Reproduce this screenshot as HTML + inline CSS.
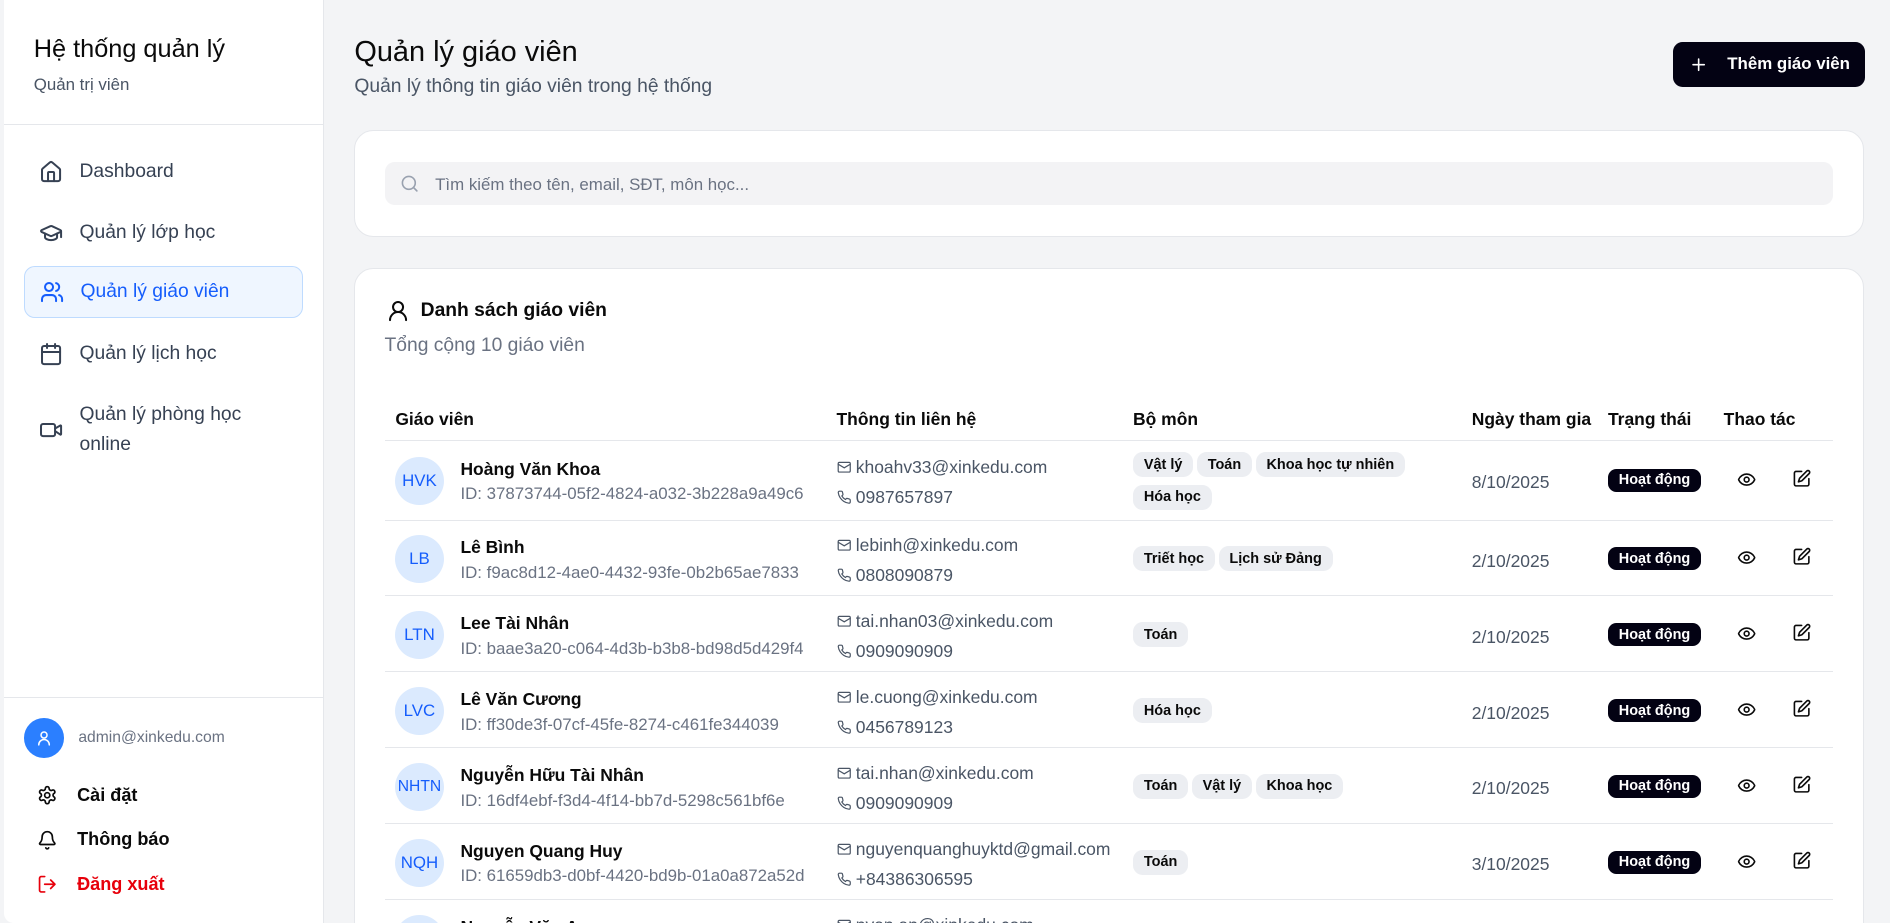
<!DOCTYPE html>
<html><head><meta charset="utf-8"><style>
html,body{margin:0;padding:0;width:1890px;height:923px;overflow:hidden}
#w{zoom:1.20536;width:1568px;height:766px;position:relative;background:#f3f4f6;font-family:"Liberation Sans",sans-serif;color:#0a0a0a;overflow:hidden}
.a{position:absolute}
svg{fill:none;stroke:currentColor;stroke-width:2;stroke-linecap:round;stroke-linejoin:round}
#sb{left:3px;top:0;width:265px;height:766px;background:#fff;border-right:1px solid #e5e7eb;border-radius:0 0 0 8px}
.nav{position:absolute;left:17px;width:232px;height:42px;display:flex;align-items:center;font-size:16px;color:#364153}
.nav svg{width:20px;height:20px;margin:0 14px 0 12px;flex:none}
.ft{position:absolute;left:28px;font-size:15px;font-weight:bold;display:flex;align-items:center}
.ft svg{width:17px;height:17px;margin-right:16px}
.card{background:#fff;border:1px solid #e5e7eb;border-radius:16px}
.th{position:absolute;top:339px;font-size:14.5px;font-weight:bold}
.row{position:absolute;left:319px;width:1202px;border-top:1px solid #e5e7eb}
.av{position:absolute;left:9px;width:40px;height:40px;border-radius:50%;background:#dbeafe;color:#155dfc;font-size:14px;display:flex;align-items:center;justify-content:center}
.nm{position:absolute;left:63px;font-size:14.5px;font-weight:bold}
.id{position:absolute;left:63px;font-size:14px;color:#6a7282}
.ct{position:absolute;left:375px;font-size:14.5px;color:#4a5565;display:flex;align-items:center}
.ct svg{width:12px;height:12px;margin-right:4px;stroke-width:2}
.tg{position:absolute;left:621px;width:240px;font-size:12px;font-weight:bold}
.tg span{display:inline-block;background:#eceef2;border-radius:8px;padding:4px 9px;margin:0 3px 6px 0}
.dt{position:absolute;left:902px;font-size:14.5px;color:#4a5565}
.st{position:absolute;left:1015px;background:#030213;color:#fff;font-size:12px;font-weight:bold;padding:3px 9px;border-radius:7px}
.ic{position:absolute;width:16px;height:16px}
</style></head><body><div id="w">
<div id="sb" class="a">
 <div class="a" style="left:25px;top:29px;font-size:21px;color:#0a0a0a">Hệ thống quản lý</div>
 <div class="a" style="left:25px;top:62px;font-size:14px;color:#4a5565">Quản trị viên</div>
 <div class="a" style="left:0;top:103px;width:265px;border-top:1px solid #e5e7eb"></div>
 <div class="nav" style="top:122px"><svg viewBox="0 0 24 24"><path d="M15 21v-8a1 1 0 0 0-1-1h-4a1 1 0 0 0-1 1v8"/><path d="M3 10a2 2 0 0 1 .7-1.5l7-6a2 2 0 0 1 2.6 0l7 6A2 2 0 0 1 21 10v9a2 2 0 0 1-2 2H5a2 2 0 0 1-2-2z"/></svg>Dashboard</div>
 <div class="nav" style="top:172px"><svg viewBox="0 0 24 24"><path d="M21.4 10.9a1 1 0 0 0 0-1.8L13 5.2a2 2 0 0 0-1.7 0L2.6 9.1a1 1 0 0 0 0 1.8l8.6 3.9a2 2 0 0 0 1.7 0z"/><path d="M22 10v6"/><path d="M6 12.5V16a6 3 0 0 0 12 0v-3.5"/></svg>Quản lý lớp học</div>
 <div class="nav" style="top:221px;background:#eff6ff;border:1px solid #bedbff;border-radius:9px;color:#155dfc;height:41px;width:230px"><svg viewBox="0 0 24 24"><path d="M16 21v-2a4 4 0 0 0-4-4H6a4 4 0 0 0-4 4v2"/><circle cx="9" cy="7" r="4"/><path d="M22 21v-2a4 4 0 0 0-3-3.9"/><path d="M16 3.1a4 4 0 0 1 0 7.8"/></svg>Quản lý giáo viên</div>
 <div class="nav" style="top:273px"><svg viewBox="0 0 24 24"><path d="M8 2v4M16 2v4"/><rect x="3" y="4" width="18" height="18" rx="2"/><path d="M3 10h18"/></svg>Quản lý lịch học</div>
 <div class="nav" style="top:330px;height:54px;line-height:25px"><svg viewBox="0 0 24 24"><path d="m16 13 5.2 3.5a.5.5 0 0 0 .8-.4V7.9a.5.5 0 0 0-.8-.4L16 10.5"/><rect x="2" y="6" width="14" height="12" rx="2"/></svg><span>Quản lý phòng học<br>online</span></div>
 <div class="a" style="left:0;top:578px;width:265px;border-top:1px solid #e5e7eb"></div>
 <div class="a" style="left:17px;top:596px;width:33px;height:33px;border-radius:50%;background:#2b7fff;color:#fff;display:flex;align-items:center;justify-content:center"><svg viewBox="0 0 24 24" style="width:15px;height:15px"><circle cx="12" cy="8" r="4"/><path d="M5 21a7 7 0 0 1 14 0"/></svg></div>
 <div class="a" style="left:62px;top:605px;font-size:13px;color:#6a7282">admin@xinkedu.com</div>
 <div class="ft" style="top:651px"><svg viewBox="0 0 24 24"><path d="M12.2 2h-.4a2 2 0 0 0-2 2v.2a2 2 0 0 1-1 1.7l-.4.3a2 2 0 0 1-2 0l-.2-.1a2 2 0 0 0-2.7.7l-.2.4a2 2 0 0 0 .7 2.7l.2.1a2 2 0 0 1 1 1.7v.5a2 2 0 0 1-1 1.7l-.2.1a2 2 0 0 0-.7 2.7l.2.4a2 2 0 0 0 2.7.7l.2-.1a2 2 0 0 1 2 0l.4.3a2 2 0 0 1 1 1.7v.2a2 2 0 0 0 2 2h.4a2 2 0 0 0 2-2v-.2a2 2 0 0 1 1-1.7l.4-.3a2 2 0 0 1 2 0l.2.1a2 2 0 0 0 2.7-.7l.2-.4a2 2 0 0 0-.7-2.7l-.2-.1a2 2 0 0 1-1-1.7v-.5a2 2 0 0 1 1-1.7l.2-.1a2 2 0 0 0 .7-2.7l-.2-.4a2 2 0 0 0-2.7-.7l-.2.1a2 2 0 0 1-2 0l-.4-.3a2 2 0 0 1-1-1.7V4a2 2 0 0 0-2-2z"/><circle cx="12" cy="12" r="3"/></svg>Cài đặt</div>
 <div class="ft" style="top:688px"><svg viewBox="0 0 24 24"><path d="M10.3 21a1.9 1.9 0 0 0 3.4 0"/><path d="M3.3 15.3A1 1 0 0 0 4 17h16a1 1 0 0 0 .7-1.7C19.4 13.9 18 12.5 18 8A6 6 0 0 0 6 8c0 4.5-1.4 5.9-2.7 7.3"/></svg>Thông báo</div>
 <div class="ft" style="top:725px;color:#e7000b"><svg viewBox="0 0 24 24"><path d="M9 21H5a2 2 0 0 1-2-2V5a2 2 0 0 1 2-2h4"/><path d="m16 17 5-5-5-5M21 12H9"/></svg>Đăng xuất</div>
</div>

<div class="a" style="left:294px;top:30px;font-size:24px">Quản lý giáo viên</div>
<div class="a" style="left:294px;top:63px;font-size:16px;color:#4a5565">Quản lý thông tin giáo viên trong hệ thống</div>
<div class="a" style="left:1388px;top:35px;width:159px;height:37px;background:#030213;border-radius:8px;color:#fff;font-size:14px;font-weight:bold;display:flex;align-items:center"><svg viewBox="0 0 24 24" style="width:16px;height:16px;margin:0 16px 0 13px"><path d="M5 12h14M12 5v14"/></svg>Thêm giáo viên</div>

<div class="a card" style="left:294px;top:108px;width:1251px;height:87px"></div>
<div class="a" style="left:319px;top:134px;width:1202px;height:36px;background:#f3f3f5;border-radius:8px"></div>
<svg class="a" viewBox="0 0 24 24" style="left:332px;top:144px;width:16px;height:16px;color:#99a1af"><circle cx="11" cy="11" r="8"/><path d="m21 21-4.3-4.3"/></svg>
<div class="a" style="left:361px;top:145px;font-size:14px;color:#6a7282">Tìm kiếm theo tên, email, SĐT, môn học...</div>

<div class="a card" style="left:294px;top:222px;width:1251px;height:560px"></div>
<svg class="a" viewBox="0 0 24 24" style="left:320px;top:248px;width:20px;height:20px"><circle cx="12" cy="8" r="5"/><path d="M20 21a8 8 0 0 0-16 0"/></svg>
<div class="a" style="left:349px;top:249px;font-size:16px;font-weight:bold">Danh sách giáo viên</div>
<div class="a" style="left:319px;top:278px;font-size:16px;color:#6a7282">Tổng cộng 10 giáo viên</div>

<div class="th" style="left:328px">Giáo viên</div>
<div class="th" style="left:694px">Thông tin liên hệ</div>
<div class="th" style="left:940px">Bộ môn</div>
<div class="th" style="left:1221px">Ngày tham gia</div>
<div class="th" style="left:1334px">Trạng thái</div>
<div class="th" style="left:1430px">Thao tác</div>

<div class="row" style="top:365px;height:66px">
 <div class="av" style="top:13px">HVK</div><div class="nm" style="top:15px">Hoàng Văn Khoa</div><div class="id" style="top:36px">ID: 37873744-05f2-4824-a032-3b228a9a49c6</div>
 <div class="ct" style="top:13px"><svg viewBox="0 0 24 24"><rect x="2" y="4" width="20" height="16" rx="2"/><path d="m22 7-10 6L2 7"/></svg>khoahv33@xinkedu.com</div>
 <div class="ct" style="top:38px"><svg viewBox="0 0 24 24"><path d="M22 16.9v3a2 2 0 0 1-2.2 2 19.8 19.8 0 0 1-8.6-3.1 19.5 19.5 0 0 1-6-6A19.8 19.8 0 0 1 2.1 4.2 2 2 0 0 1 4.1 2h3a2 2 0 0 1 2 1.7c.1 1 .4 1.9.7 2.8a2 2 0 0 1-.5 2.1L8 9.8a16 16 0 0 0 6 6l1.3-1.3a2 2 0 0 1 2.1-.4c.9.3 1.8.6 2.8.7a2 2 0 0 1 1.7 2z"/></svg>0987657897</div>
 <div class="tg" style="top:9px;width:250px"><span>Vật lý</span><span>Toán</span><span>Khoa học tự nhiên</span><span>Hóa học</span></div>
 <div class="dt" style="top:26px">8/10/2025</div><div class="st" style="top:23px">Hoạt động</div>
</div>
<div class="row" style="top:431px;height:63px">
 <div class="av" style="top:12px">LB</div><div class="nm" style="top:14px">Lê Bình</div><div class="id" style="top:35px">ID: f9ac8d12-4ae0-4432-93fe-0b2b65ae7833</div>
 <div class="ct" style="top:12px"><svg viewBox="0 0 24 24"><rect x="2" y="4" width="20" height="16" rx="2"/><path d="m22 7-10 6L2 7"/></svg>lebinh@xinkedu.com</div>
 <div class="ct" style="top:37px"><svg viewBox="0 0 24 24"><path d="M22 16.9v3a2 2 0 0 1-2.2 2 19.8 19.8 0 0 1-8.6-3.1 19.5 19.5 0 0 1-6-6A19.8 19.8 0 0 1 2.1 4.2 2 2 0 0 1 4.1 2h3a2 2 0 0 1 2 1.7c.1 1 .4 1.9.7 2.8a2 2 0 0 1-.5 2.1L8 9.8a16 16 0 0 0 6 6l1.3-1.3a2 2 0 0 1 2.1-.4c.9.3 1.8.6 2.8.7a2 2 0 0 1 1.7 2z"/></svg>0808090879</div>
 <div class="tg" style="top:21px"><span>Triết học</span><span>Lịch sử Đảng</span></div>
 <div class="dt" style="top:25px">2/10/2025</div><div class="st" style="top:22px">Hoạt động</div>
</div>
<div class="row" style="top:494px;height:63px">
 <div class="av" style="top:12px">LTN</div><div class="nm" style="top:14px">Lee Tài Nhân</div><div class="id" style="top:35px">ID: baae3a20-c064-4d3b-b3b8-bd98d5d429f4</div>
 <div class="ct" style="top:12px"><svg viewBox="0 0 24 24"><rect x="2" y="4" width="20" height="16" rx="2"/><path d="m22 7-10 6L2 7"/></svg>tai.nhan03@xinkedu.com</div>
 <div class="ct" style="top:37px"><svg viewBox="0 0 24 24"><path d="M22 16.9v3a2 2 0 0 1-2.2 2 19.8 19.8 0 0 1-8.6-3.1 19.5 19.5 0 0 1-6-6A19.8 19.8 0 0 1 2.1 4.2 2 2 0 0 1 4.1 2h3a2 2 0 0 1 2 1.7c.1 1 .4 1.9.7 2.8a2 2 0 0 1-.5 2.1L8 9.8a16 16 0 0 0 6 6l1.3-1.3a2 2 0 0 1 2.1-.4c.9.3 1.8.6 2.8.7a2 2 0 0 1 1.7 2z"/></svg>0909090909</div>
 <div class="tg" style="top:21px"><span>Toán</span></div>
 <div class="dt" style="top:25px">2/10/2025</div><div class="st" style="top:22px">Hoạt động</div>
</div>
<div class="row" style="top:557px;height:63px">
 <div class="av" style="top:12px">LVC</div><div class="nm" style="top:14px">Lê Văn Cương</div><div class="id" style="top:35px">ID: ff30de3f-07cf-45fe-8274-c461fe344039</div>
 <div class="ct" style="top:12px"><svg viewBox="0 0 24 24"><rect x="2" y="4" width="20" height="16" rx="2"/><path d="m22 7-10 6L2 7"/></svg>le.cuong@xinkedu.com</div>
 <div class="ct" style="top:37px"><svg viewBox="0 0 24 24"><path d="M22 16.9v3a2 2 0 0 1-2.2 2 19.8 19.8 0 0 1-8.6-3.1 19.5 19.5 0 0 1-6-6A19.8 19.8 0 0 1 2.1 4.2 2 2 0 0 1 4.1 2h3a2 2 0 0 1 2 1.7c.1 1 .4 1.9.7 2.8a2 2 0 0 1-.5 2.1L8 9.8a16 16 0 0 0 6 6l1.3-1.3a2 2 0 0 1 2.1-.4c.9.3 1.8.6 2.8.7a2 2 0 0 1 1.7 2z"/></svg>0456789123</div>
 <div class="tg" style="top:21px"><span>Hóa học</span></div>
 <div class="dt" style="top:25px">2/10/2025</div><div class="st" style="top:22px">Hoạt động</div>
</div>
<div class="row" style="top:620px;height:63px">
 <div class="av" style="top:12px;font-size:13px">NHTN</div><div class="nm" style="top:14px">Nguyễn Hữu Tài Nhân</div><div class="id" style="top:35px">ID: 16df4ebf-f3d4-4f14-bb7d-5298c561bf6e</div>
 <div class="ct" style="top:12px"><svg viewBox="0 0 24 24"><rect x="2" y="4" width="20" height="16" rx="2"/><path d="m22 7-10 6L2 7"/></svg>tai.nhan@xinkedu.com</div>
 <div class="ct" style="top:37px"><svg viewBox="0 0 24 24"><path d="M22 16.9v3a2 2 0 0 1-2.2 2 19.8 19.8 0 0 1-8.6-3.1 19.5 19.5 0 0 1-6-6A19.8 19.8 0 0 1 2.1 4.2 2 2 0 0 1 4.1 2h3a2 2 0 0 1 2 1.7c.1 1 .4 1.9.7 2.8a2 2 0 0 1-.5 2.1L8 9.8a16 16 0 0 0 6 6l1.3-1.3a2 2 0 0 1 2.1-.4c.9.3 1.8.6 2.8.7a2 2 0 0 1 1.7 2z"/></svg>0909090909</div>
 <div class="tg" style="top:21px"><span>Toán</span><span>Vật lý</span><span>Khoa học</span></div>
 <div class="dt" style="top:25px">2/10/2025</div><div class="st" style="top:22px">Hoạt động</div>
</div>
<div class="row" style="top:683px;height:63px">
 <div class="av" style="top:12px">NQH</div><div class="nm" style="top:14px">Nguyen Quang Huy</div><div class="id" style="top:35px">ID: 61659db3-d0bf-4420-bd9b-01a0a872a52d</div>
 <div class="ct" style="top:12px"><svg viewBox="0 0 24 24"><rect x="2" y="4" width="20" height="16" rx="2"/><path d="m22 7-10 6L2 7"/></svg>nguyenquanghuyktd@gmail.com</div>
 <div class="ct" style="top:37px"><svg viewBox="0 0 24 24"><path d="M22 16.9v3a2 2 0 0 1-2.2 2 19.8 19.8 0 0 1-8.6-3.1 19.5 19.5 0 0 1-6-6A19.8 19.8 0 0 1 2.1 4.2 2 2 0 0 1 4.1 2h3a2 2 0 0 1 2 1.7c.1 1 .4 1.9.7 2.8a2 2 0 0 1-.5 2.1L8 9.8a16 16 0 0 0 6 6l1.3-1.3a2 2 0 0 1 2.1-.4c.9.3 1.8.6 2.8.7a2 2 0 0 1 1.7 2z"/></svg>+84386306595</div>
 <div class="tg" style="top:21px"><span>Toán</span></div>
 <div class="dt" style="top:25px">3/10/2025</div><div class="st" style="top:22px">Hoạt động</div>
</div>
<div class="row" style="top:746px;height:20px;overflow:hidden">
 <div class="av" style="top:12px">NVA</div><div class="nm" style="top:14px">Nguyễn Văn An</div>
 <div class="ct" style="top:12px"><svg viewBox="0 0 24 24"><rect x="2" y="4" width="20" height="16" rx="2"/><path d="m22 7-10 6L2 7"/></svg>nvan.an@xinkedu.com</div>
</div>

<svg class="ic a" viewBox="0 0 24 24" style="left:1441px;top:390px"><path d="M2.1 12.3a1 1 0 0 1 0-.7 10.8 10.8 0 0 1 19.8 0 1 1 0 0 1 0 .7 10.8 10.8 0 0 1-19.8 0"/><circle cx="12" cy="12" r="3"/></svg>
<svg class="ic a" viewBox="0 0 24 24" style="left:1487px;top:389px"><path d="M12 3H5a2 2 0 0 0-2 2v14a2 2 0 0 0 2 2h14a2 2 0 0 0 2-2v-7"/><path d="M18.4 2.6a2.1 2.1 0 1 1 3 3L12.4 14.6 8 16l1.4-4.4z"/></svg>
<svg class="ic a" viewBox="0 0 24 24" style="left:1441px;top:455px"><path d="M2.1 12.3a1 1 0 0 1 0-.7 10.8 10.8 0 0 1 19.8 0 1 1 0 0 1 0 .7 10.8 10.8 0 0 1-19.8 0"/><circle cx="12" cy="12" r="3"/></svg>
<svg class="ic a" viewBox="0 0 24 24" style="left:1487px;top:454px"><path d="M12 3H5a2 2 0 0 0-2 2v14a2 2 0 0 0 2 2h14a2 2 0 0 0 2-2v-7"/><path d="M18.4 2.6a2.1 2.1 0 1 1 3 3L12.4 14.6 8 16l1.4-4.4z"/></svg>
<svg class="ic a" viewBox="0 0 24 24" style="left:1441px;top:518px"><path d="M2.1 12.3a1 1 0 0 1 0-.7 10.8 10.8 0 0 1 19.8 0 1 1 0 0 1 0 .7 10.8 10.8 0 0 1-19.8 0"/><circle cx="12" cy="12" r="3"/></svg>
<svg class="ic a" viewBox="0 0 24 24" style="left:1487px;top:517px"><path d="M12 3H5a2 2 0 0 0-2 2v14a2 2 0 0 0 2 2h14a2 2 0 0 0 2-2v-7"/><path d="M18.4 2.6a2.1 2.1 0 1 1 3 3L12.4 14.6 8 16l1.4-4.4z"/></svg>
<svg class="ic a" viewBox="0 0 24 24" style="left:1441px;top:581px"><path d="M2.1 12.3a1 1 0 0 1 0-.7 10.8 10.8 0 0 1 19.8 0 1 1 0 0 1 0 .7 10.8 10.8 0 0 1-19.8 0"/><circle cx="12" cy="12" r="3"/></svg>
<svg class="ic a" viewBox="0 0 24 24" style="left:1487px;top:580px"><path d="M12 3H5a2 2 0 0 0-2 2v14a2 2 0 0 0 2 2h14a2 2 0 0 0 2-2v-7"/><path d="M18.4 2.6a2.1 2.1 0 1 1 3 3L12.4 14.6 8 16l1.4-4.4z"/></svg>
<svg class="ic a" viewBox="0 0 24 24" style="left:1441px;top:644px"><path d="M2.1 12.3a1 1 0 0 1 0-.7 10.8 10.8 0 0 1 19.8 0 1 1 0 0 1 0 .7 10.8 10.8 0 0 1-19.8 0"/><circle cx="12" cy="12" r="3"/></svg>
<svg class="ic a" viewBox="0 0 24 24" style="left:1487px;top:643px"><path d="M12 3H5a2 2 0 0 0-2 2v14a2 2 0 0 0 2 2h14a2 2 0 0 0 2-2v-7"/><path d="M18.4 2.6a2.1 2.1 0 1 1 3 3L12.4 14.6 8 16l1.4-4.4z"/></svg>
<svg class="ic a" viewBox="0 0 24 24" style="left:1441px;top:707px"><path d="M2.1 12.3a1 1 0 0 1 0-.7 10.8 10.8 0 0 1 19.8 0 1 1 0 0 1 0 .7 10.8 10.8 0 0 1-19.8 0"/><circle cx="12" cy="12" r="3"/></svg>
<svg class="ic a" viewBox="0 0 24 24" style="left:1487px;top:706px"><path d="M12 3H5a2 2 0 0 0-2 2v14a2 2 0 0 0 2 2h14a2 2 0 0 0 2-2v-7"/><path d="M18.4 2.6a2.1 2.1 0 1 1 3 3L12.4 14.6 8 16l1.4-4.4z"/></svg>
</div></body></html>
